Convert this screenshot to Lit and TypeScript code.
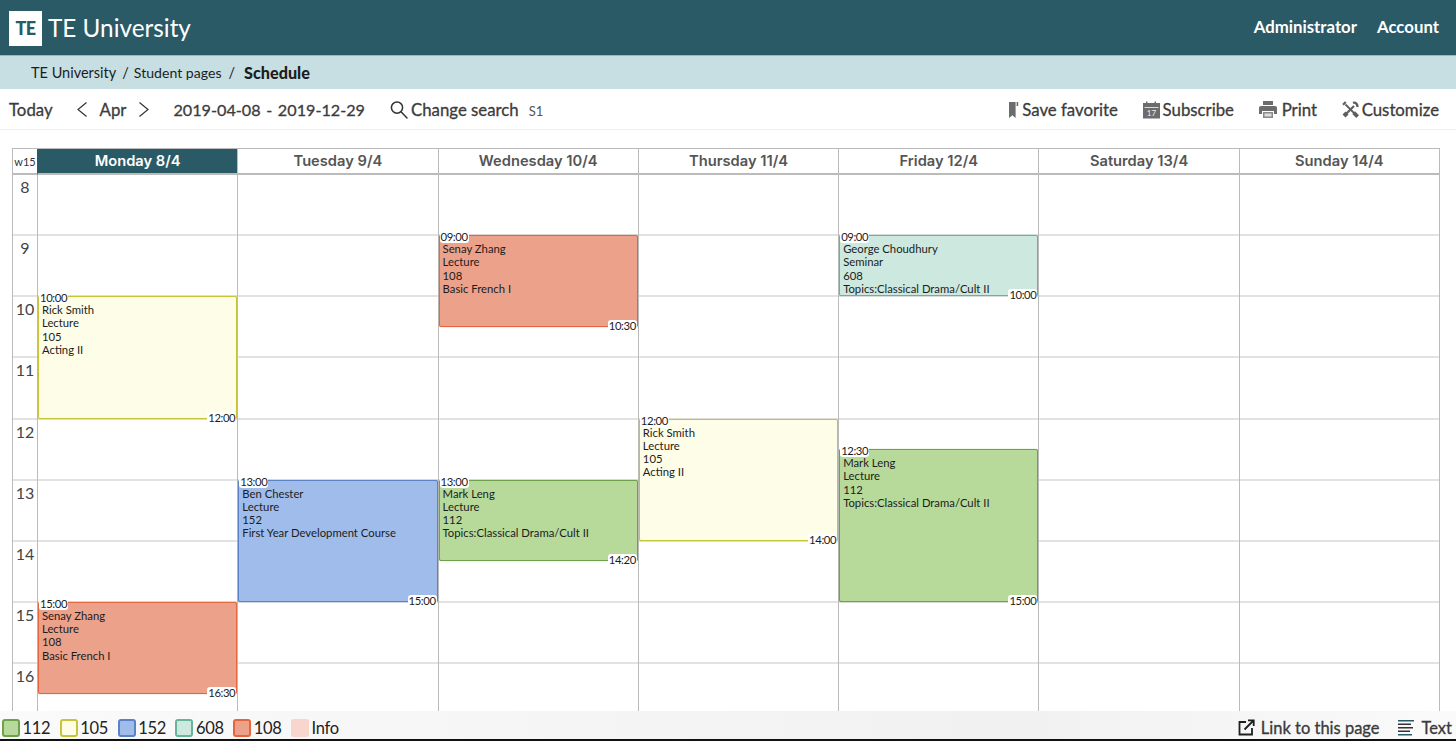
import { LitElement, html, css, svg } from "lit";
import { customElement } from "lit/decorators.js";

const HOUR = 61.14;
const START = 8;
type Kind = "green" | "yellow" | "blue" | "mint" | "red";
interface Ev { from: string; to: string; who: string; type: string; room: string; course: string; kind: Kind; }

const french = { who: "Senay Zhang", type: "Lecture", room: "108", course: "Basic French I", kind: "red" as Kind };
const acting = { who: "Rick Smith", type: "Lecture", room: "105", course: "Acting II", kind: "yellow" as Kind };
const drama = { who: "Mark Leng", type: "Lecture", room: "112", course: "Topics:Classical Drama/Cult II", kind: "green" as Kind };

const days: { label: string; current?: boolean; events: Ev[] }[] = [
  { label: "Monday 8/4", current: true, events: [
    { from: "10:00", to: "12:00", ...acting },
    { from: "15:00", to: "16:30", ...french },
  ] },
  { label: "Tuesday 9/4", events: [
    { from: "13:00", to: "15:00", who: "Ben Chester", type: "Lecture", room: "152", course: "First Year Development Course", kind: "blue" },
  ] },
  { label: "Wednesday 10/4", events: [
    { from: "09:00", to: "10:30", ...french },
    { from: "13:00", to: "14:20", ...drama },
  ] },
  { label: "Thursday 11/4", events: [{ from: "12:00", to: "14:00", ...acting }] },
  { label: "Friday 12/4", events: [
    { from: "09:00", to: "10:00", who: "George Choudhury", type: "Seminar", room: "608", course: "Topics:Classical Drama/Cult II", kind: "mint" },
    { from: "12:30", to: "15:00", ...drama },
  ] },
  { label: "Saturday 13/4", events: [] },
  { label: "Sunday 14/4", events: [] },
];
const hours = [8, 9, 10, 11, 12, 13, 14, 15, 16];
const legend: { kind: string; label: string }[] = [
  { kind: "green", label: "112" },
  { kind: "yellow", label: "105" },
  { kind: "blue", label: "152" },
  { kind: "mint", label: "608" },
  { kind: "red", label: "108" },
  { kind: "info", label: "Info" },
];
const toY = (t: string) => {
  const [h, m] = t.split(":").map(Number);
  return (h + m / 60 - START) * HOUR;
};

const iconSearch = svg`<svg width="20" height="20" viewBox="0 0 20 20" fill="none" stroke="#333" stroke-width="1.5"><circle cx="8" cy="7.6" r="5.6"/><path d="M12 11.8l6 6.2" stroke-linecap="round"/></svg>`;
const iconLeft = svg`<svg width="14" height="20" viewBox="0 0 14 20" fill="none" stroke="#333" stroke-width="1.2"><path d="M11.5 2.5L3 9.5l8.5 7"/></svg>`;
const iconRight = svg`<svg width="14" height="20" viewBox="0 0 14 20" fill="none" stroke="#333" stroke-width="1.2"><path d="M2.5 2.5L11 9.5l-8.5 7"/></svg>`;
const iconBookmark = svg`<svg width="11" height="18" viewBox="0 0 11 18" fill="#6c6c6c"><path d="M1 1h6.6v16L4.400 14.200 1 17z"/><path d="M8.600 1h1.600v4H8.600z"/></svg>`;
const iconCal = svg`<svg width="17" height="18" viewBox="0 0 17 18"><path fill="#6c6c6c" d="M0 2h3V.5h1.500V2h7V.5h1.500V2h4v15.500H0z"/><path fill="#d9d9d9" d="M1.500 6h14v1H1.500z"/><text x="8.500" y="15" font-size="8" font-family="Lato, sans-serif" fill="#eee" text-anchor="middle">17</text></svg>`;
const iconPrint = svg`<svg width="18" height="17" viewBox="0 0 18 17"><path fill="#6c6c6c" d="M4 0h10v4H4z"/><path fill="#6c6c6c" d="M2 5h14a2 2 0 0 1 2 2v6h-3v-3H3v3H0V7a2 2 0 0 1 2-2z"/><path fill="#8a8a8a" d="M4 11h10v6H4z"/><path fill="#ddd" d="M5.500 12.500h7v3h-7z"/></svg>`;
const iconTools = svg`<svg width="17" height="17" viewBox="0 0 17 17" fill="none" stroke="#5f5f5f"><path stroke-width="1.800" d="M3.500 3.500L13.500 13.500"/><path stroke-width="2.200" d="M3.500 13.500L12 5"/><path stroke-width="2.200" d="M1 3.800L3.800 1"/><path stroke-width="2.400" d="M11 1.800a3.400 3.400 0 0 1 4.200 4.200"/><path fill="#5f5f5f" stroke="none" d="M.5 13.500l3-3 3 3-3 3zM10.300 13l2.700-2.700 4 4-2.700 2.700z"/></svg>`;
const iconLink = svg`<svg width="17" height="17" viewBox="0 0 17 17" fill="none" stroke="#1f1f1f" stroke-width="1.800"><path d="M8 3H1.500v12.500H14V9"/><path d="M6.500 10.500L15.500 1.500M10 1.300h5.700V7"/></svg>`;
const iconText = svg`<svg width="16" height="16" viewBox="0 0 16 16"><g fill="#2b5a67"><path d="M0 0h16v1.600H0zM0 14h14v1.600H0z"/></g><g fill="#333"><path d="M0 3.500h13v1.500H0zM0 7h15v1.500H0zM0 10.500h12v1.500H0z"/></g></svg>`;

@customElement("app-root")
export class AppRoot extends LitElement {
  static styles = css`
    :host {
      display: flex;
      flex-direction: column;
      height: 741px;
      overflow: hidden;
      font-family: Lato, "Liberation Sans", sans-serif;
      color: #333;
      background: #fff;
    }
    .top {
      height: 56px;
      flex: none;
      box-sizing: border-box;
      background: #2b5a67;
      border-bottom: 1px solid #8fbcc3;
      display: flex;
      align-items: center;
      padding: 0 17px 0 9px;
      color: #fff;
    }
    .logo {
      width: 33px;
      height: 35px;
      margin-top: 1px;
      background: #fff;
      color: #2b5a67;
      font-weight: 900;
      font-size: 18px;
      display: flex;
      align-items: center;
      justify-content: center;
      letter-spacing: -0.5px;
    }
    .brand { font-size: 24.300px; margin-left: 6px; }
    .top nav { margin-left: auto; display: flex; gap: 20px; font-size: 16.800px; font-weight: 700; padding-bottom: 2px; }
    .crumbs {
      height: 33px;
      flex: none;
      background: #c7dfe2;
      display: flex;
      align-items: center;
      padding-left: 31px;
      font-size: 14.500px;
      color: #1d1d1d;
      white-space: pre;
    }
    .crumbs i { font-style: normal; font-size: 14.100px; }
    .crumbs b { font-size: 16.200px; font-weight: 900; margin-left: 9px; }
    .crumbs .sep { margin: 0 5px 0 6px; }
    .crumbs .sep2 { margin-left: 7px; }
    .toolbar {
      height: 41px;
      flex: none;
      box-sizing: border-box;
      border-bottom: 1px solid #eee;
      display: flex;
      align-items: center;
      padding: 1px 17px 0 9px;
      font-size: 16.800px;
      color: #3c3c3c;
      -webkit-text-stroke: 0.3px #3c3c3c;
    }
    .toolbar svg { flex: none; -webkit-text-stroke: 0; }
    .tb-today { margin-right: 22px; }
    .apr { margin: 0 11px 0 11px; }
    .range { margin-left: 22px; word-spacing: 1.500px; font-size: 16.200px; }
    .search { margin-left: 24px; display: flex; align-items: center; gap: 2px; }
    .search small { font-size: 13px; margin-left: 8px; color: #555; padding-top: 2px; -webkit-text-stroke: 0; }
    .actions { margin-left: auto; display: flex; gap: 24.700px; }
    .action { display: flex; align-items: center; gap: 3px; }
    .action.wide { gap: 5px; }
    .cal-wrap { flex: 1; min-height: 0; padding: 18px 16px 0 12px; overflow: hidden; }
    .cal {
      display: grid;
      grid-template-columns: 24px repeat(7, 1fr);
      border: solid #bbb;
      border-width: 1px 1px 0 1px;
    }
    .head {
      height: 24px;
      border-bottom: 2px solid #bbb;
      border-left: 1px solid #bbb;
      display: flex;
      align-items: center;
      justify-content: center;
      font-family: Inter, "Open Sans", sans-serif;
      font-weight: 600;
      font-size: 14.700px;
      color: #555;
    }
    .head.w { border-left: 0; font-family: Lato, sans-serif; font-weight: 400; font-size: 11px; color: #333; }
    .head.current { background: #2b5a67; color: #fff; border-left-color: #2b5a67; }
    .hours { grid-column: 1; }
    .hour {
      height: 61.140px;
      box-sizing: border-box;
      border-bottom: 2px solid #e2e2e2;
      font-size: 16px;
      text-align: center;
      color: #444;
      padding-top: 2px;
    }
    .day { position: relative; border-left: 1px solid #bbb; }
    .cell { height: 61.140px; box-sizing: border-box; border-bottom: 2px solid #e2e2e2; }
    .ev {
      position: absolute;
      left: 0;
      right: 0;
      margin-top: -1px;
      box-sizing: border-box;
      border: 1px solid var(--edge);
      border-radius: 2px;
      box-shadow: 0 0 1px var(--edge);
      padding: 6px 3px 0;
      font-size: 11.300px;
      line-height: 13.200px;
      color: #1c1c1c;
    }
    .ev div { white-space: nowrap; }
    .time {
      position: absolute;
      background: #fff;
      font-size: 11.300px;
      line-height: 12px;
      letter-spacing: -0.4px;
      padding: 0 1px;
      border-radius: 3px;
      color: #1c1c1c;
    }
    .time.s { left: 0; top: -5px; }
    .time.e { right: 0; bottom: -6px; }
    .green { background: #b7da9b; --edge: #6fa14d; }
    .yellow { background: #fefee8; --edge: #c8c43a; }
    .blue { background: #a0bcea; --edge: #5c81c4; }
    .mint { background: #cde8df; --edge: #66b49a; }
    .red { background: #eca28a; --edge: #e2673f; }
    .info { background: #f8d6cd; --edge: #f8d6cd; }
    .foot {
      height: 30px;
      flex: none;
      box-sizing: border-box;
      background: linear-gradient(90deg, #fafafa, #f1f1f1 70%, #fafafa);
      border-bottom: 2px solid #111;
      display: flex;
      align-items: center;
      padding: 5px 4px 0 2px;
      font-size: 16.500px;
      color: #222;
    }
    .leg { display: flex; align-items: center; gap: 2.500px; margin-right: 9.500px; letter-spacing: -0.3px; }
    .swatch { width: 18px; height: 18px; box-sizing: border-box; border: 2px solid var(--edge); border-radius: 3px; }
    .foot-right { margin-left: auto; display: flex; gap: 18px; color: #3a3a3a; -webkit-text-stroke: 0.3px #3a3a3a; }
    .foot-right span { display: flex; align-items: center; gap: 6px; }
    .foot-right .t { gap: 8px; }
  `;

  render() {
    return html`
      <header class="top">
        <div class="logo">TE</div>
        <div class="brand">TE University</div>
        <nav><span>Administrator</span><span>Account</span></nav>
      </header>
      <div class="crumbs">TE University<span class="sep">/</span><i>Student pages</i><span class="sep2">/</span><b>Schedule</b></div>
      <div class="toolbar">
        <span class="tb-today">Today</span>
        ${iconLeft}<span class="apr">Apr</span>${iconRight}
        <span class="range">2019-04-08 - 2019-12-29</span>
        <span class="search">${iconSearch}Change search<small>S1</small></span>
        <div class="actions">
          <span class="action">${iconBookmark}Save favorite</span>
          <span class="action">${iconCal}Subscribe</span>
          <span class="action wide">${iconPrint}Print</span>
          <span class="action">${iconTools}Customize</span>
        </div>
      </div>
      <div class="cal-wrap">
        <div class="cal">
          <div class="head w">w15</div>
          ${days.map((d) => html`<div class="head ${d.current ? "current" : ""}">${d.label}</div>`)}
          <div class="hours">${hours.map((h) => html`<div class="hour">${h}</div>`)}</div>
          ${days.map((d) => html`
            <div class="day">
              ${hours.map(() => html`<div class="cell"></div>`)}
              ${d.events.map((e) => html`
                <div class="ev ${e.kind}" style="top:${toY(e.from)}px;height:${toY(e.to) - toY(e.from)}px">
                  <span class="time s">${e.from}</span>
                  <div>${e.who}</div><div>${e.type}</div><div>${e.room}</div><div>${e.course}</div>
                  <span class="time e">${e.to}</span>
                </div>`)}
            </div>`)}
        </div>
      </div>
      <footer class="foot">
        ${legend.map((l) => html`<span class="leg"><span class="swatch ${l.kind}"></span>${l.label}</span>`)}
        <div class="foot-right">
          <span>${iconLink}Link to this page</span>
          <span class="t">${iconText}Text</span>
        </div>
      </footer>
    `;
  }
}
